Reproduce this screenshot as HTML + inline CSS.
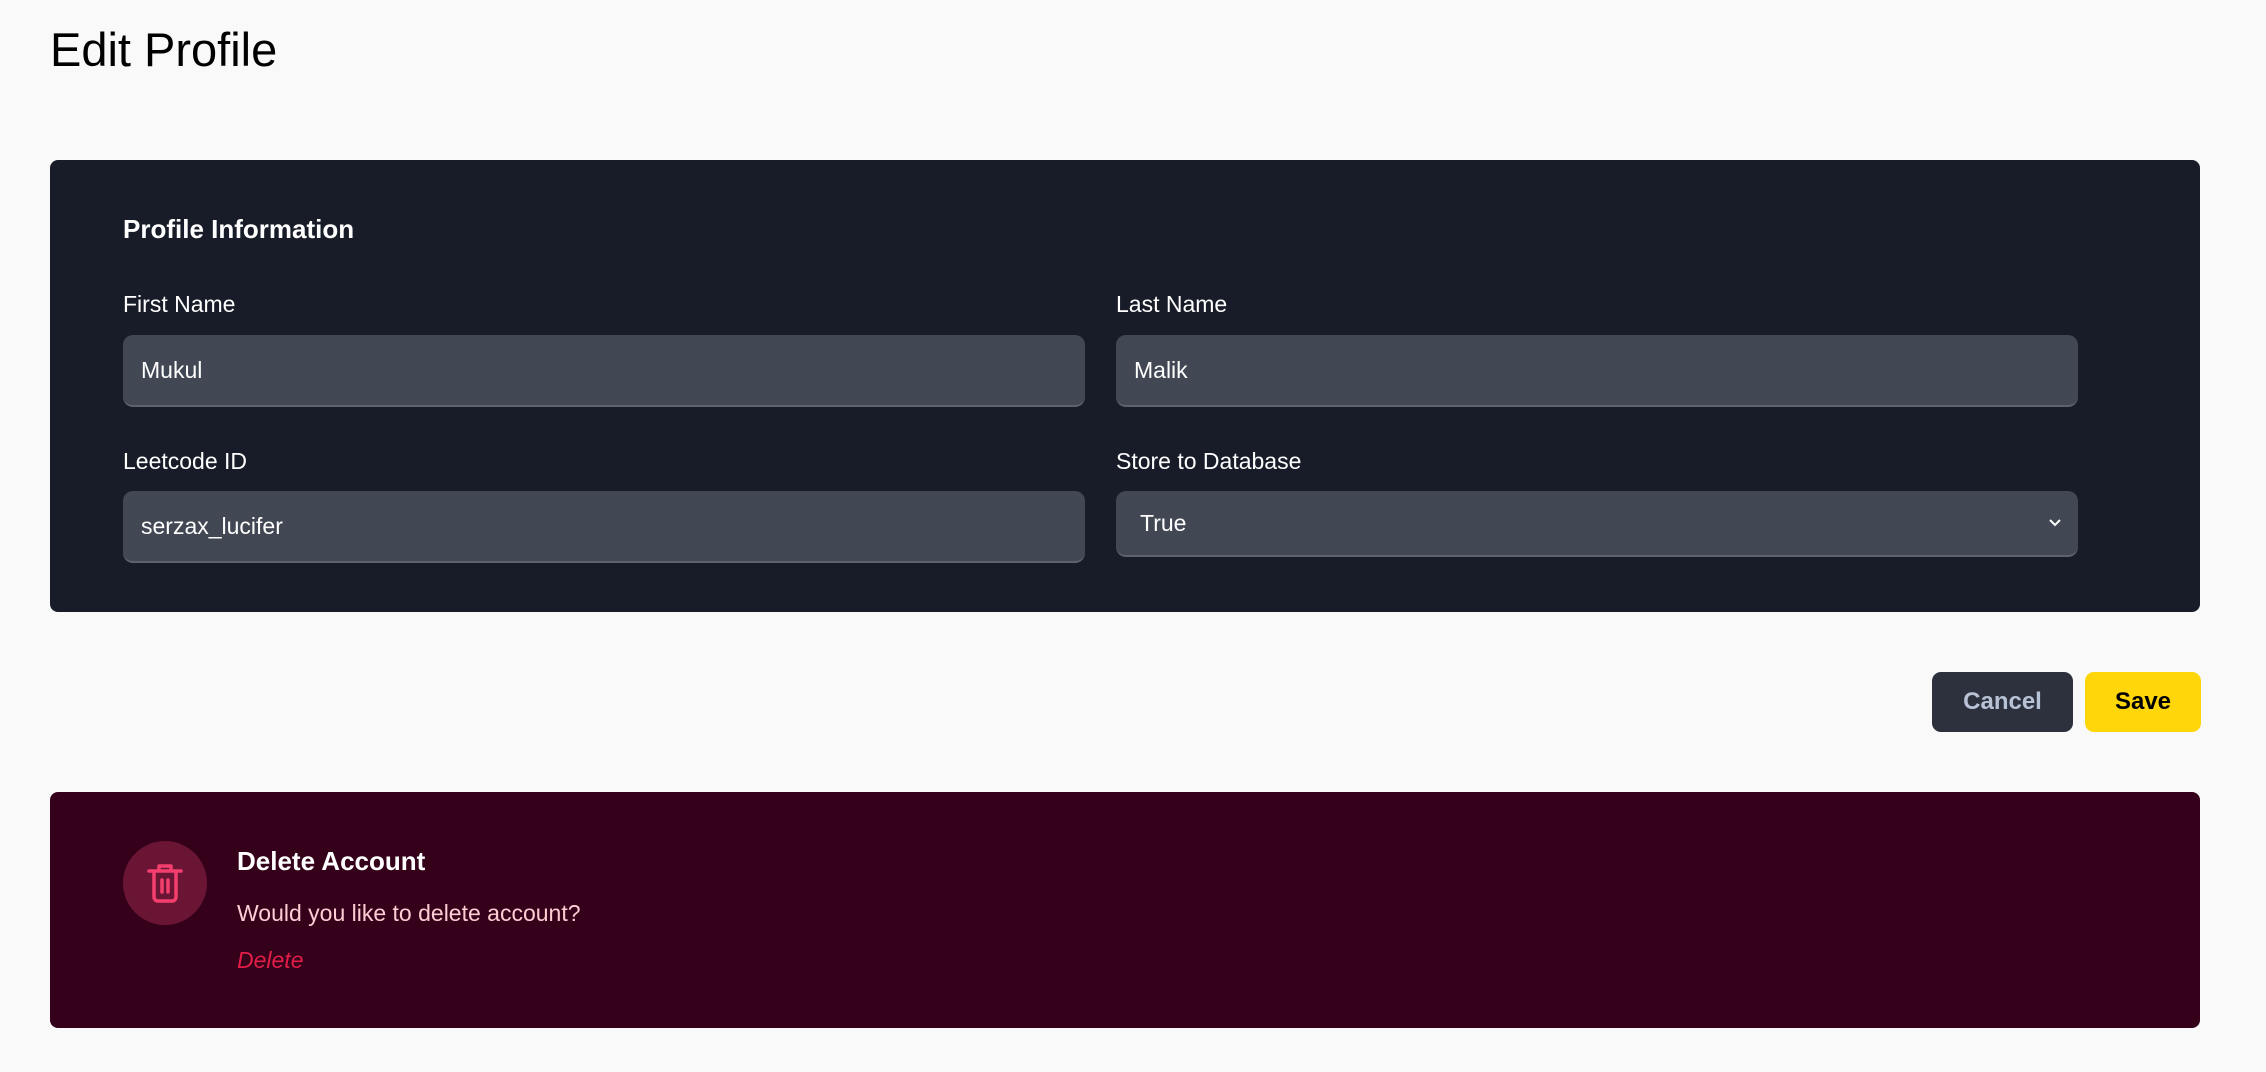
<!DOCTYPE html>
<html><head><style>
body{margin:0;background:#f9f9f9;font-family:"Liberation Sans",sans-serif;width:2266px;height:1072px;position:relative;overflow:hidden}
.a{position:absolute}
h1{position:absolute;left:50px;top:22px;margin:0;font-weight:400;font-size:47px;color:#000}
.card{position:absolute;left:50px;top:160px;width:2150px;height:452px;background:#171c28;border-radius:8px}
.lbl{position:absolute;color:#fff;font-size:23px}
.inp{position:absolute;background:#414753;border-radius:10px;border-bottom:2px solid #5d626c;color:#fff;font-size:23px;box-sizing:border-box;padding-left:18px;display:flex;align-items:center}
.btn{position:absolute;top:672px;height:60px;border-radius:9px;font-weight:700;font-size:24px;display:flex;align-items:center;justify-content:center}
</style></head><body>
<h1>Edit Profile</h1>
<div class="card">
<div class="lbl" style="left:73px;top:54px;font-weight:700;font-size:26px">Profile Information</div>
<div class="lbl" style="left:73px;top:131px">First Name</div>
<div class="lbl" style="left:1066px;top:131px">Last Name</div>
<div class="inp" style="left:73px;top:175px;width:962px;height:72px">Mukul</div>
<div class="inp" style="left:1066px;top:175px;width:962px;height:72px">Malik</div>
<div class="lbl" style="left:73px;top:288px">Leetcode ID</div>
<div class="lbl" style="left:1066px;top:288px">Store to Database</div>
<div class="inp" style="left:73px;top:331px;width:962px;height:72px">serzax_lucifer</div>
<div class="inp" style="left:1066px;top:331px;width:962px;height:66px;padding-left:24px">True
<svg class="a" style="right:16px;top:27px" width="14" height="10" viewBox="0 0 14 10"><path d="M2 2l5 5 5-5" fill="none" stroke="#fff" stroke-width="2"/></svg></div>
</div>
<div class="btn" style="left:1932px;width:141px;background:#2c313d;color:#b8c2d6">Cancel</div>
<div class="btn" style="left:2085px;width:116px;background:#ffd60a;color:#000">Save</div>
<div class="a" style="left:50px;top:792px;width:2150px;height:236px;background:#34001a;border-radius:8px">
<div class="a" style="left:73px;top:49px;width:84px;height:84px;border-radius:50%;background:#6b1535"></div>
<svg class="a" style="left:95px;top:70px" width="40" height="42" viewBox="0 0 40 42"><g fill="none" stroke="#f43f6e" stroke-width="3.5" stroke-linecap="round" stroke-linejoin="round"><path d="M4 9h32M14 9V4h12v5M9 9v26a4 4 0 0 0 4 4h14a4 4 0 0 0 4-4V9M17 18v12M23 18v12"/></g></svg>
<div class="a" style="left:187px;top:54px;color:#fff;font-weight:700;font-size:26px">Delete Account</div>
<div class="a" style="left:187px;top:108px;color:#fecdd3;font-size:23px">Would you like to delete account?</div>
<div class="a" style="left:187px;top:155px;color:#e11d48;font-size:23px;font-style:italic">Delete</div>
</div>
</body></html>
